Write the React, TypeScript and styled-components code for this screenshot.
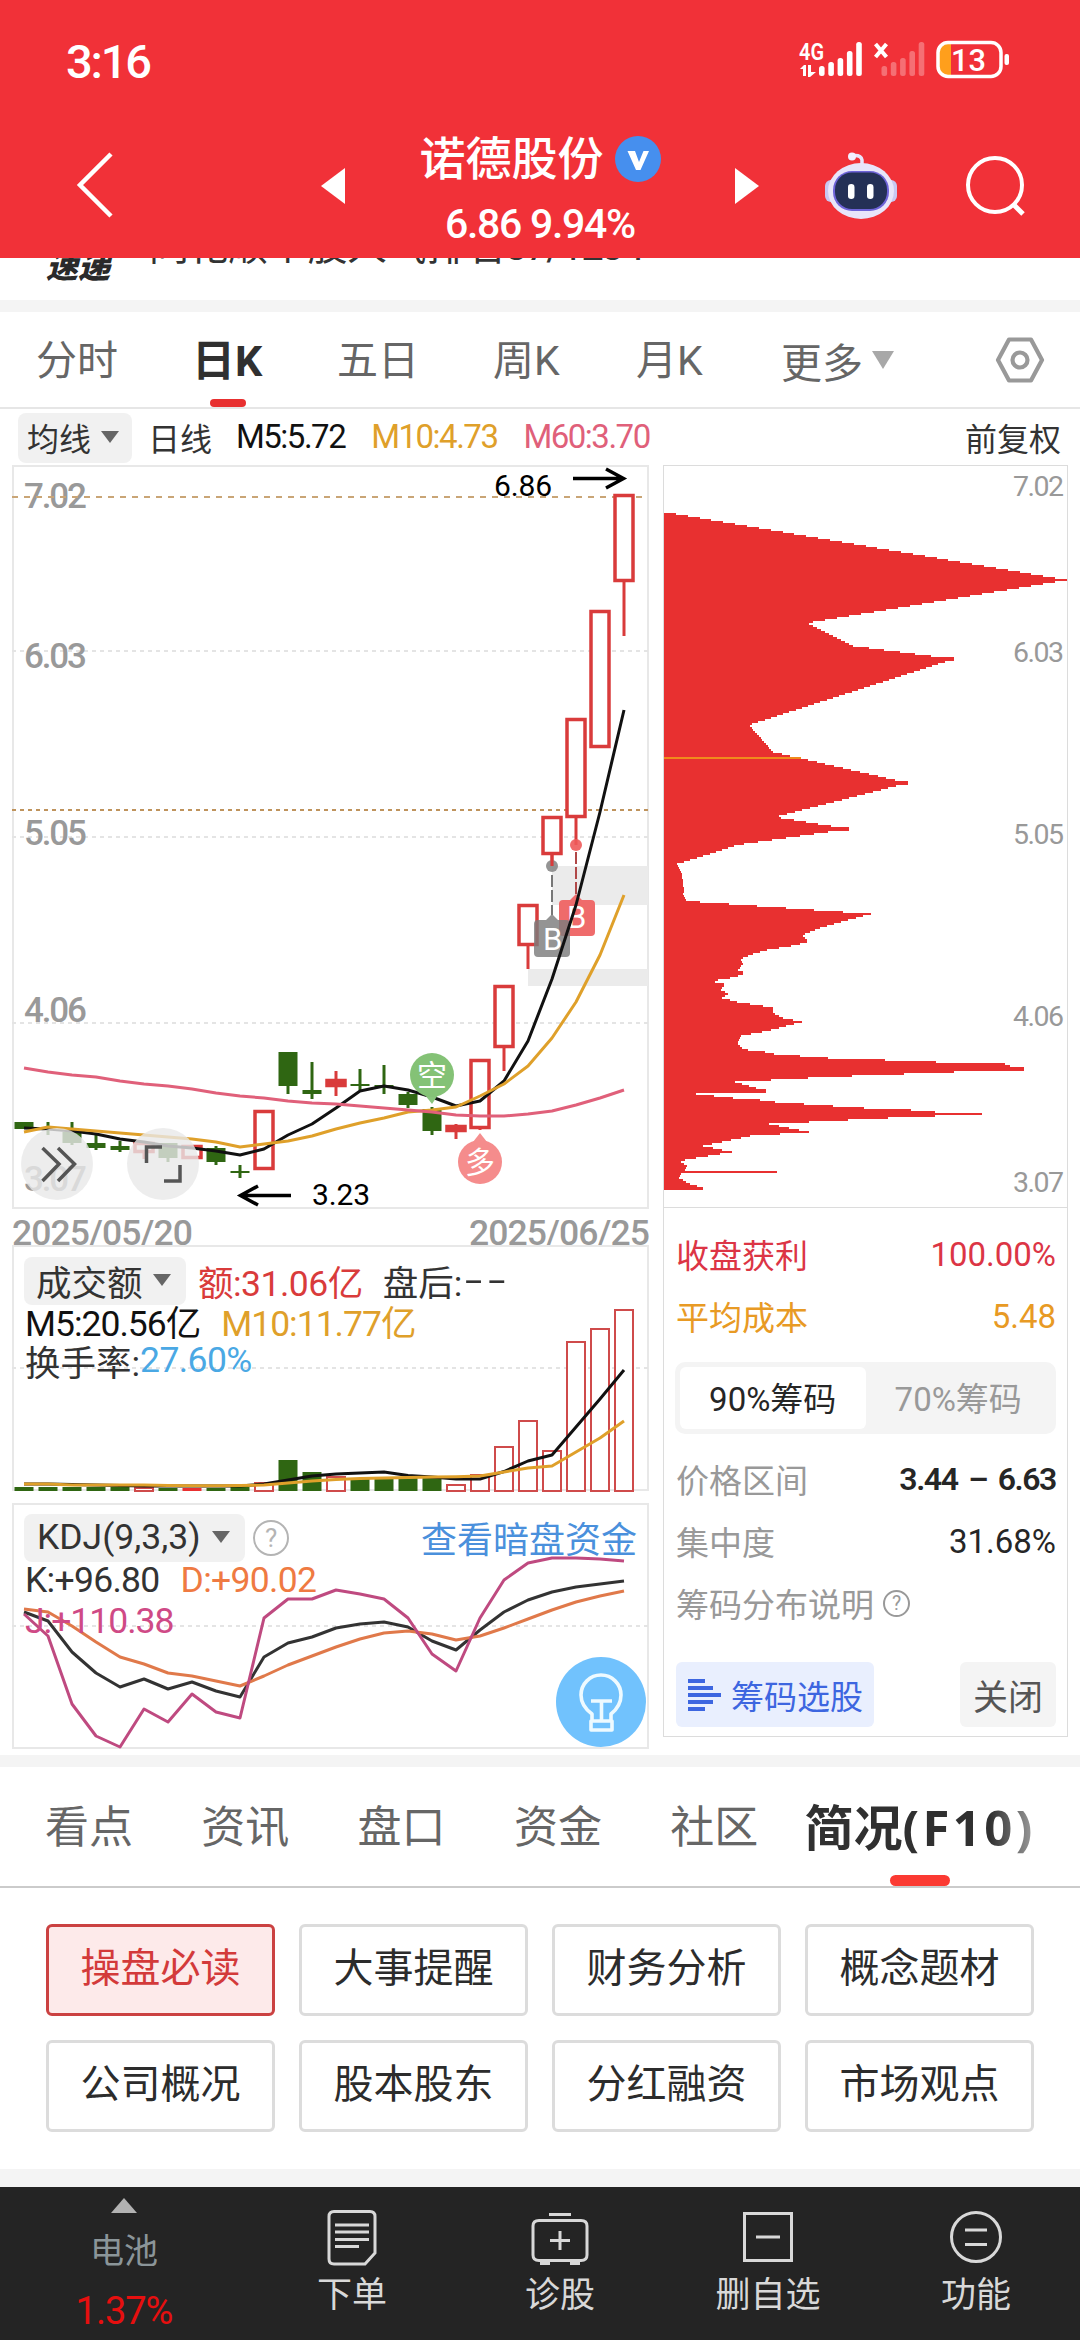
import React from 'react';
import styled, { createGlobalStyle } from 'styled-components';

const RED = '#e83030';
const UP = '#d93b3b';
const DOWN = '#2f6612';
const FONT = 'Roboto, "Noto Sans CJK SC", sans-serif';

const GlobalStyle = createGlobalStyle`
  * { box-sizing: border-box; }
  html, body { margin: 0; padding: 0; background: #fff; }
  body { font-family: ${FONT}; color: #333; }
`;

const Page = styled.div`
  width: 1080px;
  height: 2340px;
  overflow: hidden;
  display: flex;
  flex-direction: column;
  background: #fff;
`;

/* ---------- header ---------- */
const Header = styled.header`
  flex: none;
  height: 258px;
  background: #f13138;
  color: #fff;
`;
const StatusBar = styled.div`
  height: 114px;
  display: flex;
  justify-content: space-between;
  padding: 8px 70px 0 66px;
`;
const Clock = styled.div`
  font-size: 47px;
  line-height: 107px;
  font-weight: 500;
  letter-spacing: -2.2px;
`;
const NavBar = styled.div`
  display: grid;
  grid-template-columns: 321px 24px 390px 24px 1fr;
  height: 144px;
  align-items: center;
`;
const BackCell = styled.div`
  padding: 0 0 3px 76px;
  display: flex;
`;
const TitleBlock = styled.div`
  align-self: start;
  padding-top: 20px;
  display: flex;
  flex-direction: column;
  align-items: center;
`;
const TitleLine = styled.div`
  display: flex;
  align-items: center;
  gap: 11px;
  font-size: 46px;
  line-height: 50px;
  font-weight: 500;
`;
const Quote = styled.div`
  margin-top: 20px;
  font-size: 41px;
  line-height: 40px;
  font-weight: 500;
  letter-spacing: -1.3px;
`;
const NavActions = styled.div`
  display: flex;
  align-items: center;
  padding-left: 65px;
  gap: 67px;
`;

/* ---------- news strip ---------- */
const NewsStrip = styled.div`
  flex: none;
  height: 42px;
  overflow: hidden;
  display: flex;
  align-items: flex-start;
  padding-left: 46px;
`;
const NewsTag = styled.div`
  width: 103px;
  margin-top: -10px;
  font: italic 900 32px/33px "Noto Sans CJK SC", sans-serif;
  color: #2a2a2a;
`;
const NewsText = styled.div`
  margin-top: -31px;
  font-size: 40px;
  line-height: 40px;
  letter-spacing: -0.4px;
  white-space: nowrap;
`;
const NewsRank = styled.span`
  letter-spacing: -2px;
`;
const Separator = styled.div<{ $h: number }>`
  flex: none;
  height: ${p => p.$h}px;
  background: #f4f4f4;
`;

/* ---------- period tabs ---------- */
const PeriodTabs = styled.nav`
  flex: none;
  height: 97px;
  display: flex;
  padding: 0 35px 0 36px;
  border-bottom: 2px solid #e6e6e6;
`;
const PeriodTab = styled.div<{ $w: number; $active?: boolean }>`
  width: ${p => p.$w}px;
  display: flex;
  flex-direction: column;
  font-size: ${p => (p.$active ? 43 : 41)}px;
  line-height: 99px;
  white-space: nowrap;
  text-indent: ${p => (p.$active ? -3 : 0)}px;
  color: ${p => (p.$active ? '#303030' : '#666')};
  font-weight: ${p => (p.$active ? 700 : 400)};
`;
const TabBar = styled.i`
  width: 36px;
  height: 9px;
  margin: -12px 0 0 15px;
  border-radius: 4px;
  background: ${RED};
`;
const MoreTab = styled.div`
  display: flex;
  align-items: center;
  gap: 9px;
  flex: 1;
  font-size: 41px;
  color: #666;
`;
const Caret = styled.i<{ $w: number; $h: number; $c: string }>`
  width: 0;
  height: 0;
  border-left: ${p => p.$w / 2}px solid transparent;
  border-right: ${p => p.$w / 2}px solid transparent;
  border-top: ${p => p.$h}px solid ${p => p.$c};
`;
const SettingCell = styled.div`
  display: flex;
  align-items: center;
`;

/* ---------- average line row ---------- */
const AverageRow = styled.div`
  flex: none;
  height: 56px;
  display: flex;
  align-items: center;
  padding: 1px 19px 0 18px;
  font-size: 32px;
  white-space: nowrap;
`;
const Chip = styled.div<{ $w: number; $h: number; $pad: number; $gap: number }>`
  width: ${p => p.$w}px;
  height: ${p => p.$h}px;
  padding: 0 0 2px ${p => p.$pad}px;
  display: flex;
  align-items: center;
  gap: ${p => p.$gap}px;
  border-radius: 8px;
  background: #f1f1f1;
`;
const Txt = styled.span<{ $c?: string; $ml?: number; $ls?: number; $fs?: number; $w?: number }>`
  color: ${p => p.$c || '#333'};
  margin-left: ${p => p.$ml || 0}px;
  padding-bottom: 2px;
  letter-spacing: ${p => p.$ls || 0}px;
  font-size: ${p => (p.$fs ? p.$fs + 'px' : 'inherit')};
  font-weight: ${p => p.$w || 400};
  white-space: nowrap;
`;
const RightTxt = styled(Txt)`
  margin-left: auto;
`;
const EmptyMark = styled(Txt)`
  display: inline-block;
  transform: scaleX(1.75);
  transform-origin: left center;
`;

/* ---------- chart area ---------- */
const Body = styled.main`
  flex: none;
  height: 1290px;
  display: flex;
  justify-content: space-between;
  padding: 0 12px 0 12px;
`;
const Charts = styled.section`
  width: 637px;
  display: flex;
  flex-direction: column;
`;
const ChartBox = styled.div<{ $h: number; $mt?: number }>`
  position: relative;
  height: ${p => p.$h}px;
  margin-top: ${p => p.$mt || 0}px;
`;
const Plot = styled.svg`
  position: absolute;
  left: 0;
  top: 0;
  display: block;
  overflow: visible;
`;
const Dates = styled.div`
  height: 37px;
  padding-top: 4px;
  display: flex;
  justify-content: space-between;
  font-size: 35.5px;
  line-height: 40px;
  letter-spacing: -0.9px;
  color: #999;
  font-weight: 500;
`;
const Legend = styled.div`
  position: relative;
  padding: 11px 12px 0 12px;
  font-size: 35.5px;
`;
const LegendLine = styled.div<{ $h: number }>`
  height: ${p => p.$h}px;
  display: flex;
  align-items: center;
  padding-left: 1px;
`;
const LegendHead = styled.div`
  height: 48px;
  display: flex;
  align-items: center;
`;
const HelpDot = styled.span<{ $d: number; $ml: number; $c: string }>`
  width: ${p => p.$d}px;
  height: ${p => p.$d}px;
  margin-left: ${p => p.$ml}px;
  border: 2.5px solid ${p => p.$c};
  border-radius: 50%;
  color: ${p => p.$c};
  font-size: ${p => p.$d * 0.72}px;
  display: flex;
  align-items: center;
  justify-content: center;
`;

/* ---------- chip distribution panel ---------- */
const ChipPanel = styled.aside`
  width: 405px;
  height: 1272px;
  border: 1px solid #dcdcdc;
  display: flex;
  flex-direction: column;
`;
const Profile = styled.svg`
  flex: none;
  display: block;
`;
const StatList = styled.div`
  flex: 1;
  border-top: 1px solid #dcdcdc;
  padding: 15px 11px 0 12px;
  font-size: 33px;
`;
const StatRow = styled.div<{ $h: number; $c: string; $v?: string; $b?: boolean }>`
  height: ${p => p.$h}px;
  display: flex;
  align-items: center;
  color: ${p => p.$c};
  b {
    margin-left: auto;
    font-size: ${p => (p.$b ? 32 : 33)}px;
    font-weight: ${p => (p.$b ? 600 : 400)};
    color: ${p => p.$v || 'inherit'};
    letter-spacing: ${p => (p.$b ? '-1.4px' : 0)};
    word-spacing: ${p => (p.$b ? '4px' : 0)};
  }
`;
const Segmented = styled.div`
  height: 72px;
  margin: 15px 0 14px -1px;
  padding: 5px;
  border-radius: 10px;
  background: #f4f4f4;
  display: flex;
`;
const Segment = styled.div<{ $on?: boolean }>`
  flex: 1;
  display: flex;
  align-items: center;
  justify-content: center;
  padding-bottom: 2px;
  border-radius: 6px;
  color: ${p => (p.$on ? '#262626' : '#999')};
  background: ${p => (p.$on ? '#fff' : 'transparent')};
`;
const PanelActions = styled.div`
  margin-top: 28px;
  display: flex;
  justify-content: space-between;
`;
const PickButton = styled.button`
  width: 198px;
  height: 65px;
  border: 0;
  border-radius: 6px;
  padding: 0 0 0 12px;
  display: flex;
  align-items: center;
  gap: 10px;
  background: #e9effe;
  color: #3d66e0;
  font: 33px ${FONT};
`;
const CloseButton = styled.button`
  width: 96px;
  height: 65px;
  border: 0;
  border-radius: 6px;
  padding: 0;
  background: #f4f4f4;
  color: #555;
  font: 35px ${FONT};
`;

/* ---------- lower tabs ---------- */
const InfoTabs = styled.nav`
  flex: none;
  height: 121px;
  border-bottom: 2px solid #cbcbcb;
  padding-left: 45px;
  display: flex;
  gap: 68.3px;
`;
const InfoTab = styled.div`
  font-size: 44px;
  line-height: 123px;
  color: #666;
  white-space: nowrap;
`;
const ActiveTab = styled.div`
  margin-left: -22px;
  display: flex;
  flex-direction: column;
`;
const ActiveLabel = styled.div`
  font: 700 49px/121px "Noto Sans", "Noto Sans CJK SC", sans-serif;
  height: 108px;
  white-space: nowrap;
  color: #303030;
  mask-image: linear-gradient(90deg, #000 80%, rgba(0, 0, 0, 0.45) 100%);
`;
const ActiveSuffix = styled.span`
  letter-spacing: 3.4px;
`;
const ActiveBar = styled.i`
  width: 60px;
  height: 12px;
  margin-left: 86px;
  border-radius: 6px;
  background: #fb3a32;
`;
const ShortcutGrid = styled.div`
  flex: none;
  height: 281px;
  padding: 36px 46px 0;
  display: grid;
  grid-template-columns: repeat(4, 229px);
  grid-auto-rows: 92px;
  gap: 24px;
  align-content: start;
`;
const Shortcut = styled.div<{ $on?: boolean }>`
  border: 3px solid ${p => (p.$on ? '#cb4141' : '#dcdcdc')};
  border-radius: 6px;
  background: ${p => (p.$on ? '#fdeaea' : '#fff')};
  color: ${p => (p.$on ? '#d33a3a' : '#2c2c2c')};
  font-size: 40px;
  line-height: 84px;
  text-align: center;
`;

/* ---------- bottom bar ---------- */
const BottomBar = styled.footer`
  flex: none;
  height: 153px;
  background: #242424;
  color: #d8d8d8;
  display: grid;
  grid-template-columns: 248px 208px 208px 208px 208px;
`;
const Sector = styled.div`
  display: flex;
  flex-direction: column;
  align-items: center;
  padding-top: 11px;
`;
const SectorUp = styled.i`
  border: 13.5px solid transparent;
  border-top: 0;
  border-bottom: 15px solid #b2b2b2;
`;
const SectorName = styled.div`
  margin-top: 16px;
  font-size: 34px;
  line-height: 44px;
  color: #8b9599;
`;
const SectorValue = styled.div`
  margin-top: 16px;
  font-size: 38px;
  line-height: 44px;
  color: #e60f0f;
  letter-spacing: -1px;
`;
const BarItem = styled.div`
  display: flex;
  flex-direction: column;
  align-items: center;
  padding-top: 20px;
  font-size: 35px;
  line-height: 46px;
`;
const BarIcon = styled.svg`
  display: block;
  width: 60px;
  height: 60px;
  margin-bottom: 6px;
  fill: none;
  stroke: #d8d8d8;
  stroke-width: 3;
`;

/* ---------- data ---------- */
type Candle = { up?: boolean; top: number; bot: number; hi?: number; lo?: number };
const candles: Candle[] = [
  { top: 1122, bot: 1129 },
  { top: 1128, bot: 1130, hi: 1122, lo: 1135 },
  { top: 1132, bot: 1143, hi: 1122, lo: 1145 },
  { top: 1143, bot: 1148, hi: 1135, lo: 1150 },
  { top: 1146, bot: 1150, hi: 1141, lo: 1152 },
  { up: true, top: 1142, bot: 1153, lo: 1159 },
  { top: 1143, bot: 1158, lo: 1162 },
  { up: true, top: 1145, bot: 1159 },
  { top: 1148, bot: 1162, hi: 1146, lo: 1165 },
  { top: 1171, bot: 1173, hi: 1165, lo: 1178 },
  { up: true, top: 1110, bot: 1170 },
  { top: 1052, bot: 1086, lo: 1094 },
  { top: 1090, bot: 1094, hi: 1062, lo: 1099 },
  { up: true, top: 1079, bot: 1087, hi: 1071, lo: 1096 },
  { top: 1084, bot: 1086, hi: 1069, lo: 1090 },
  { top: 1085, bot: 1087, hi: 1065, lo: 1094 },
  { top: 1094, bot: 1105, hi: 1092, lo: 1108 },
  { top: 1109, bot: 1131, hi: 1107, lo: 1135 },
  { up: true, top: 1125, bot: 1132, hi: 1124, lo: 1139 },
  { up: true, top: 1059, bot: 1129, lo: 1130 },
  { up: true, top: 985, bot: 1048, lo: 1071 },
  { up: true, top: 904, bot: 946, lo: 969 },
  { up: true, top: 816, bot: 855, lo: 866 },
  { up: true, top: 718, bot: 818, lo: 845 },
  { up: true, top: 610, bot: 748 },
  { up: true, top: 494, bot: 582, lo: 636 },
];
const ma5 = [1128, 1129, 1131, 1134, 1139, 1142, 1146, 1148, 1151, 1155, 1149, 1135, 1124, 1108, 1091, 1086, 1090, 1097, 1106, 1101, 1081, 1041, 979, 905, 812, 710];
const ma10 = [1132, 1127, 1129, 1131, 1133, 1135, 1137, 1139, 1142, 1147, 1144, 1141, 1136, 1129, 1123, 1118, 1112, 1110, 1107, 1096, 1084, 1066, 1038, 1002, 955, 895];
const ma60 = [1068, 1072, 1075, 1077, 1081, 1084, 1086, 1089, 1093, 1096, 1098, 1101, 1103, 1104, 1106, 1108, 1110, 1112, 1115, 1116, 1116, 1114, 1111, 1105, 1098, 1090];
const volTops = [1487, 1487, 1487, 1487, 1487, 1487, 1488, 1488, 1488, 1487, 1482, 1460, 1472, 1476, 1478, 1478, 1478, 1478, 1484, 1474, 1446, 1420, 1450, 1341, 1328, 1309];
const vol5 = [1484, 1484, 1484.5, 1485, 1485.5, 1486, 1486, 1486, 1486, 1486, 1484, 1480, 1476, 1474, 1473, 1472, 1475.5, 1477, 1479, 1479, 1471.5, 1461, 1455, 1427, 1399, 1370];
const vol10 = [1484, 1484, 1485, 1485, 1485, 1485, 1485.5, 1485.7, 1485.7, 1485.5, 1485, 1483, 1481, 1479.5, 1478.5, 1478, 1477.5, 1477, 1476.7, 1476, 1472, 1468, 1466, 1452, 1438, 1421];
const kLine = [1612, 1621, 1652, 1673, 1687, 1679, 1689, 1682, 1691, 1697, 1657, 1643, 1637, 1628, 1624, 1622, 1627, 1641, 1650, 1630, 1612, 1600, 1592, 1587, 1584, 1581];
const dLine = [1609, 1612, 1626, 1642, 1657, 1664, 1673, 1676, 1681, 1686, 1676, 1665, 1656, 1647, 1639, 1633, 1631, 1634, 1640, 1636, 1628, 1619, 1610, 1602, 1596, 1591];
const jLine = [1614, 1636, 1704, 1736, 1747, 1709, 1722, 1694, 1712, 1718, 1618, 1599, 1599, 1590, 1594, 1599, 1618, 1654, 1671, 1618, 1580, 1563, 1558, 1558, 1559, 1561];
const profile =
  '664,512 1067,580 807,623 853,646 954,659 749,725 773,752 908,783 775,817 849,829 737,845 710,854 677,864 682,875 684,890 683,895 686,901 871,914 837,923 817,929 802,935 807,941 797,945 767,950 753,954 740,959 743,964 738,970 743,973 736,977 712,981 724,985 721,990 728,994 722,998 737,1002 763,1006 773,1008 773,1013 783,1018 802,1022 767,1031 741,1036 737,1043 742,1049 765,1053 800,1057 885,1060 936,1062 1005,1065 1024,1069 930,1073 826,1077 735,1082 766,1091 696,1094 760,1101 833,1106 911,1111 982,1114 888,1118 769,1124 809,1132 750,1136 703,1146 732,1152 702,1157 679,1161 687,1166 685,1171 777,1172 681,1174 679,1178 690,1184 703,1188 703,1190';

/* Turns the outline into 2px-high price rows, keeping every peak. */
const knots = profile.split(' ').map(p => p.split(',').map(Number));
const profilePath = (() => {
  let d = 'M664 511';
  for (let y = 512; y <= 1188; y += 2) {
    let x = 664;
    for (let i = 1; i < knots.length; i++) {
      const [x0, y0] = knots[i - 1];
      const [x1, y1] = knots[i];
      if (y >= y0 && y <= y1) {
        const v = x0 + ((x1 - x0) * (y - y0)) / (y1 - y0);
        if (v > x) x = v;
      }
      if (Math.abs(y1 - y) <= 1 && x1 > x && x1 > x0) x = x1;
    }
    d += ` H${x.toFixed(0)} V${y + 1}`;
  }
  return d + ' V1190 H664Z';
})();

const cx = (i: number) => 24 + i * 24;
const pts = (a: number[]) => a.map((y, i) => `${cx(i)},${y}`).join(' ');

const Line = ({ data, color, w = 3 }: { data: number[]; color: string; w?: number }) => (
  <polyline points={pts(data)} fill="none" stroke={color} strokeWidth={w} strokeLinejoin="round" />
);

const Grid = ({ y, tone = '#e4e4e4', dash = '4 4' }: { y: number; tone?: string; dash?: string }) => (
  <line x1={12} x2={648} y1={y} y2={y} stroke={tone} strokeWidth={2} strokeDasharray={dash} />
);

const PriceChart = () => (
  <Plot width={637} height={744} viewBox="12 465 637 744" fontFamily={FONT}>
    <rect x={13} y={466} width={635} height={742} fill="none" stroke="#e8e8e8" strokeWidth={2} />
    <Grid y={651} />
    <Grid y={837} />
    <Grid y={1023} />
    <rect x={552} y={866} width={96} height={39} fill="#ebebeb" />
    <rect x={528} y={969} width={120} height={17} fill="#ebebeb" />
    <g fill="#999" fontSize={35} fontWeight={500}>
      {([['7.02', 508], ['6.03', 668], ['5.05', 845], ['4.06', 1022], ['3.07', 1191]] as [string, number][]).map(([t, y]) => (
        <text key={t} x={24} y={y} textLength={63}>{t}</text>
      ))}
    </g>
    <Grid y={497} tone="#c9a576" dash="6 6" />
    <Grid y={810} tone="#bf935c" dash="4 4" />
    {candles.map((c, i) => {
      const x = cx(i);
      const col = c.up ? UP : DOWN;
      return (
        <g key={i}>
          {c.hi !== undefined && <line x1={x} x2={x} y1={c.hi} y2={c.top} stroke={col} strokeWidth={3} />}
          {c.lo !== undefined && <line x1={x} x2={x} y1={c.bot} y2={c.lo} stroke={col} strokeWidth={3} />}
          {c.up ? (
            <rect x={x - 9} y={c.top + 1.5} width={18} height={c.bot - c.top - 3} fill={c.bot - c.top < 10 ? col : '#fff'} stroke={col} strokeWidth={3.5} />
          ) : (
            <rect x={x - 9.5} y={c.top} width={19} height={c.bot - c.top} fill={col} />
          )}
        </g>
      );
    })}
    <circle cx={576} cy={845} r={6} fill="#ee5a5a" opacity={0.9} />
    <line x1={576} x2={576} y1={852} y2={895} stroke="#b04848" strokeWidth={2} strokeDasharray="12 3" />
    <path d="M564 900 H570 L576 894 L582 900 H591 Q595 900 595 904 V932 Q595 936 591 936 H563 Q559 936 559 932 V904 Q559 900 563 900Z" fill="#ef6b6b" />
    <circle cx={552} cy={866} r={6} fill="#888" opacity={0.9} />
    <line x1={552} x2={552} y1={855} y2={866} stroke={UP} strokeWidth={3} />
    <line x1={552} x2={552} y1={875} y2={915} stroke="#777" strokeWidth={2} strokeDasharray="12 3" />
    <path d="M540 920 H546 L552 914 L558 920 H566 Q570 920 570 924 V953 Q570 957 566 957 H538 Q534 957 534 953 V924 Q534 920 538 920Z" fill="#7d7d7d" opacity={0.82} />
    <g fill="#fff" fontSize={31}>
      <text x={567} y={928}>B</text>
      <text x={543} y={950}>B</text>
    </g>
    <Line data={ma5} color="#111" />
    <Line data={ma10} color="#dfa02a" />
    <Line data={ma60} color="#e0607a" />
    <path d="M425 1095 L432 1104 L438 1095Z" fill="#88c47c" />
    <circle cx={432} cy={1075} r={22} fill="#84c276" />
    <path d="M473 1142 L480 1133 L487 1142Z" fill="#f58e8e" />
    <circle cx={480} cy={1162} r={22} fill="#f58c8c" />
    <g fill="#fff" fontSize={30} textAnchor="middle">
      <text x={432} y={1086}>空</text>
      <text x={480} y={1173}>多</text>
    </g>
    <g fill="none" stroke="#000" strokeWidth={3.5}>
      <path d="M573 478.5 H623 M606 469 L623.5 478.5 L606 488" />
      <path d="M291 1195.5 H241 M258 1186 L240.5 1195.5 L258 1205" />
    </g>
    <g fill="#000" fontSize={30}>
      <text x={494} y={496} textLength={58}>6.86</text>
      <text x={312} y={1204.5} textLength={58}>3.23</text>
    </g>
    <g fill="#e9e9e9" opacity={0.8}>
      <circle cx={57} cy={1164} r={36} />
      <circle cx={163} cy={1164} r={36} />
    </g>
    <g fill="none" stroke="#555" strokeWidth={3.5}>
      <path d="M42.5 1148 L59 1164 L42.5 1181 M58 1148 L74.5 1164 L58 1181" />
      <path d="M146.5 1163 V1147 H162 M180 1165 V1181 H164" />
    </g>
  </Plot>
);

const VolumeChart = () => (
  <Plot width={637} height={246} viewBox="12 1246 637 246">
    <rect x={13} y={1246} width={635} height={244} fill="none" stroke="#e8e8e8" strokeWidth={2} />
    <Grid y={1368} />
    {volTops.map((y, i) => {
      const hollow = candles[i].up && i !== 7;
      return hollow ? (
        <rect key={i} x={cx(i) - 9} y={y + 1} width={18} height={1490 - y} fill="#fff" stroke="#cf4b4b" strokeWidth={2} />
      ) : (
        <rect key={i} x={cx(i) - 9.5} y={y} width={19} height={1491 - y} fill={i === 7 ? RED : DOWN} />
      );
    })}
    <Line data={vol5} color="#111" />
    <Line data={vol10} color="#dfa02a" />
  </Plot>
);

const KdjChart = () => (
  <Plot width={637} height={246} viewBox="12 1503 637 246">
    <rect x={13} y={1504} width={635} height={244} fill="none" stroke="#e8e8e8" strokeWidth={2} />
    <Grid y={1626} />
    <Line data={kLine} color="#333" />
    <Line data={dLine} color="#e0794a" />
    <Line data={jLine} color="#bf4a80" />
    <circle cx={601} cy={1702} r={45} fill="#71c2fd" />
    <g fill="none" stroke="#eefaff" strokeWidth={3.6} strokeLinejoin="round">
      <path d="M592 1722 V1714 Q581 1706 581 1695 A20 20 0 0 1 621 1695 Q621 1706 611 1714 V1722 M591 1721 H612 V1730 H591Z" />
      <path d="M591 1701 H612 M601.500 1701 V1720" />
    </g>
  </Plot>
);

const SignalArea = styled.svg`
  margin-top: 28px;
`;

const StatusIcons = () => (
  <SignalArea width={212} height={48} viewBox="798 36 212 48" fill="#fff">
    <text x={799} y={60} fontSize={23} fontWeight={600} textLength={25} lengthAdjust="spacingAndGlyphs" fontFamily="Roboto, sans-serif">4G</text>
    <path d="M800 69 L804 65 H806 V76 H803 V69Z M808 65 H811 V72 H816 L810 77 H808Z" />
    {[0, 1].map(s => (
      <g key={s} opacity={s ? 0.3 : 1}>
        {[66, 62, 58, 51, 42].map((y, i) => (
          <rect key={i} x={819 + s * 62.5 + i * 9.3} y={y} width={5.6} height={76 - y} rx={2.5} />
        ))}
      </g>
    ))}
    <path d="M875.5 44 L886.5 57 M886.5 44 L875.5 57" stroke="#fff" strokeWidth={4} />
    <path d="M939 50 Q939 44 945 44 H951 V75 H945 Q939 75 939 69Z" fill="#ff9f1c" />
    <rect x={938} y={42.5} width={63} height={34} rx={10} fill="none" stroke="#fff" strokeWidth={3.5} />
    <rect x={1004.5} y={54} width={4.5} height={11} rx={2} />
    <text x={951} y={71} fontSize={32} fontWeight={500} textLength={35} lengthAdjust="spacingAndGlyphs" fontFamily="Roboto, sans-serif">13</text>
  </SignalArea>
);

const Robot = () => (
  <svg width={74} height={70} viewBox="824 148 74 70">
    <path d="M862 163 V157 Q861 152 854 152.5" fill="none" stroke="#e9e6fb" strokeWidth={3.5} strokeLinecap="round" />
    <circle cx={852} cy={153.5} r={4} fill="#f3f0ff" />
    <rect x={825} y={177} width={12} height={22} rx={6} fill="#c9c8f2" />
    <rect x={885} y={177} width={12} height={22} rx={6} fill="#c9c8f2" />
    <ellipse cx={861} cy={188} rx={33} ry={28} fill="#e8e5fa" />
    <rect x={833} y={168} width={56} height={40} rx={19} fill="#6e63d8" />
    <rect x={835} y={169.5} width={52} height={36.5} rx={17} fill="#243056" />
    <rect x={848} y={181} width={6.5} height={15} rx={3.2} fill="#fff" />
    <rect x={867} y={181} width={6.5} height={15} rx={3.2} fill="#fff" />
  </svg>
);

const periods = [
  { t: '分时', w: 159 },
  { t: '日K', w: 142, on: true },
  { t: '五日', w: 156 },
  { t: '周K', w: 143 },
  { t: '月K', w: 145 },
];

const shortcuts = ['操盘必读', '大事提醒', '财务分析', '概念题材', '公司概况', '股本股东', '分红融资', '市场观点'];

export default function App() {
  return (
    <Page>
      <GlobalStyle />
      <Header>
        <StatusBar>
          <Clock>3:16</Clock>
          <StatusIcons />
        </StatusBar>
        <NavBar>
          <BackCell>
            <svg width={38} height={66} viewBox="0 0 38 66" fill="none" stroke="#fff" strokeWidth={4.5}>
              <path d="M35 2 L4 33 L35 64" />
            </svg>
          </BackCell>
          <svg width={24} height={36} fill="#fff"><path d="M24 0 V36 L0 18Z" /></svg>
          <TitleBlock>
            <TitleLine>
              诺德股份
              <svg width={46} height={46} viewBox="0 0 46 46">
                <circle cx={23} cy={23} r={23} fill="#468fee" />
                <path d="M12.5 15 H20 L24 26 L28.5 15 H34 L25.5 34 H21Z" fill="#fff" />
              </svg>
            </TitleLine>
            <Quote>6.86 9.94%</Quote>
          </TitleBlock>
          <svg width={24} height={36} fill="#fff"><path d="M0 0 V36 L24 18Z" /></svg>
          <NavActions>
            <Robot />
            <svg width={62} height={64} viewBox="0 0 62 64" fill="none" stroke="#fff" strokeWidth={4}>
              <circle cx={30} cy={31} r={27} />
              <path d="M48 50 L58 60" strokeWidth={5} />
            </svg>
          </NavActions>
        </NavBar>
      </Header>

      <NewsStrip>
        <NewsTag>速递</NewsTag>
        <NewsText>同花顺个股人气排名<NewsRank>37/1234</NewsRank></NewsText>
      </NewsStrip>
      <Separator $h={12} />

      <PeriodTabs>
        {periods.map(p => (
          <PeriodTab key={p.t} $w={p.w} $active={p.on}>
            {p.t}
            {p.on && <TabBar />}
          </PeriodTab>
        ))}
        <MoreTab>
          更多
          <Caret $w={23} $h={18} $c="#a8a8a8" />
        </MoreTab>
        <SettingCell>
          <svg width={50} height={48} viewBox="0 0 50 48" fill="none" stroke="#999" strokeWidth={4.2} strokeLinejoin="round">
            <path d="M14 3.5 H36 L47 24 L36 44.5 H14 L3 24Z" />
            <circle cx={25} cy={24} r={7.5} />
          </svg>
        </SettingCell>
      </PeriodTabs>

      <AverageRow>
        <Chip $w={114} $h={50} $pad={9} $gap={10}>
          均线
          <Caret $w={19} $h={12} $c="#666" />
        </Chip>
        <Txt $ml={16}>日线</Txt>
        <Txt $ml={24} $ls={-1.5} $fs={33} $c="#111">M5:5.72</Txt>
        <Txt $ml={26} $ls={-1.5} $fs={33} $c="#dfa02a">M10:4.73</Txt>
        <Txt $ml={26} $ls={-1.5} $fs={33} $c="#e0607a">M60:3.70</Txt>
        <RightTxt>前复权</RightTxt>
      </AverageRow>

      <Body>
        <Charts>
          <ChartBox $h={744}><PriceChart /></ChartBox>
          <Dates><span>2025/05/20</span><span>2025/06/25</span></Dates>
          <ChartBox $h={246}>
            <VolumeChart />
            <Legend>
              <LegendHead>
                <Chip $w={162} $h={48} $pad={12} $gap={10}>
                  成交额
                  <Caret $w={18} $h={12} $c="#666" />
                </Chip>
                <Txt $c={UP} $ml={12} $ls={-0.5}>额:31.06亿</Txt>
                <Txt $ml={20}>盘后:</Txt>
                <EmptyMark $ls={3.5} $ml={3}>--</EmptyMark>
              </LegendHead>
              <LegendLine $h={32}>
                <Txt $c="#111" $ls={-1}>M5:20.56亿</Txt>
                <Txt $c="#dfa02a" $ls={-1} $ml={21}>M10:11.77亿</Txt>
              </LegendLine>
              <LegendLine $h={48}>
                <Txt>换手率:</Txt>
                <Txt $c="#4aa8e4" $ls={-0.6}>27.60%</Txt>
              </LegendLine>
            </Legend>
          </ChartBox>
          <ChartBox $h={246} $mt={11}>
            <KdjChart />
            <Legend>
              <LegendHead>
                <Chip $w={221} $h={48} $pad={13} $gap={11}>
                  KDJ(9,3,3)
                  <Caret $w={18} $h={12} $c="#666" />
                </Chip>
                <HelpDot $d={36} $ml={8} $c="#b4b4b4">?</HelpDot>
                <RightTxt $c="#4a90dc" $fs={36}>查看暗盘资金</RightTxt>
              </LegendHead>
              <LegendLine $h={38}>
                <Txt $ls={-0.7}>K:+96.80</Txt>
                <Txt $c="#ef7a42" $ls={-0.7} $ml={21}>D:+90.02</Txt>
              </LegendLine>
              <LegendLine $h={44}>
                <Txt $c="#cf4a86" $ls={-1}>J:+110.38</Txt>
              </LegendLine>
            </Legend>
          </ChartBox>
        </Charts>

        <ChipPanel>
          <Profile width={403} height={741} viewBox="664 466 403 741" fontFamily={FONT}>
            <path d={profilePath} fill={RED} shapeRendering="crispEdges" />
            <line x1={664} x2={801} y1={758} y2={758} stroke="#f08a1c" strokeWidth={2} />
            <g fill="#999" fontSize={28.5}>
              {([['7.02', 496], ['6.03', 662], ['5.05', 844], ['4.06', 1026], ['3.07', 1192]] as [string, number][]).map(([t, y]) => (
                <text key={t} x={1013} y={y} textLength={51}>{t}</text>
              ))}
            </g>
          </Profile>
          <StatList>
            <StatRow $h={62} $c="#dc3545">收盘获利<b>100.00%</b></StatRow>
            <StatRow $h={62} $c="#e89a24">平均成本<b>5.48</b></StatRow>
            <Segmented>
              <Segment $on>90%筹码</Segment>
              <Segment>70%筹码</Segment>
            </Segmented>
            <StatRow $h={62} $c="#999" $v="#262626" $b>价格区间<b>3.44 – 6.63</b></StatRow>
            <StatRow $h={62} $c="#999" $v="#262626">集中度<b>31.68%</b></StatRow>
            <StatRow $h={62} $c="#999">筹码分布说明<HelpDot $d={27} $ml={9} $c="#999">?</HelpDot></StatRow>
            <PanelActions>
              <PickButton>
                <svg width={33} height={32} fill="#3d66e0">
                  <path d="M0 0h17v4H0z M0 7h25v4H0z M0 14h33v4H0z M0 21h25v4H0z M0 28h17v4H0z" />
                </svg>
                筹码选股
              </PickButton>
              <CloseButton>关闭</CloseButton>
            </PanelActions>
          </StatList>
        </ChipPanel>
      </Body>
      <Separator $h={12} />

      <InfoTabs>
        {['看点', '资讯', '盘口', '资金', '社区'].map(t => <InfoTab key={t}>{t}</InfoTab>)}
        <ActiveTab>
          <ActiveLabel>简况<ActiveSuffix>(F10)</ActiveSuffix></ActiveLabel>
          <ActiveBar />
        </ActiveTab>
      </InfoTabs>
      <ShortcutGrid>
        {shortcuts.map((s, i) => <Shortcut key={s} $on={i === 0}>{s}</Shortcut>)}
      </ShortcutGrid>
      <Separator $h={18} />

      <BottomBar>
        <Sector>
          <SectorUp />
          <SectorName>电池</SectorName>
          <SectorValue>1.37%</SectorValue>
        </Sector>
        <BarItem>
          <BarIcon viewBox="0 0 60 60">
            <path d="M12 4.5 H48 Q53 4.5 53 9.5 V46 L43 57 H12 Q7 57 7 52 V9.5 Q7 4.5 12 4.5Z" />
            <path d="M13 18 H47 M13 25 H47 M13 32.5 H47 M13 39.5 H37" />
          </BarIcon>
          下单
        </BarItem>
        <BarItem>
          <BarIcon viewBox="0 0 60 60">
            <path d="M19 7.5 H41 M9 13.5 H51 Q57 13.5 57 19 V48 Q57 53.5 51 53.5 H9 Q3 53.5 3 48 V19 Q3 13.5 9 13.5Z M30 24 V43 M20 33.5 H40" />
            <path d="M10 56.5 H20 M40 56.5 H50" />
          </BarIcon>
          诊股
        </BarItem>
        <BarItem>
          <BarIcon viewBox="0 0 60 60">
            <path d="M6.5 6.5 H53.5 V53.5 H6.5Z M18 30 H42" />
          </BarIcon>
          删自选
        </BarItem>
        <BarItem>
          <BarIcon viewBox="0 0 60 60">
            <circle cx={30} cy={30} r={24.5} />
            <path d="M19 23 H41 M19 37.5 H41" />
          </BarIcon>
          功能
        </BarItem>
      </BottomBar>
    </Page>
  );
}
